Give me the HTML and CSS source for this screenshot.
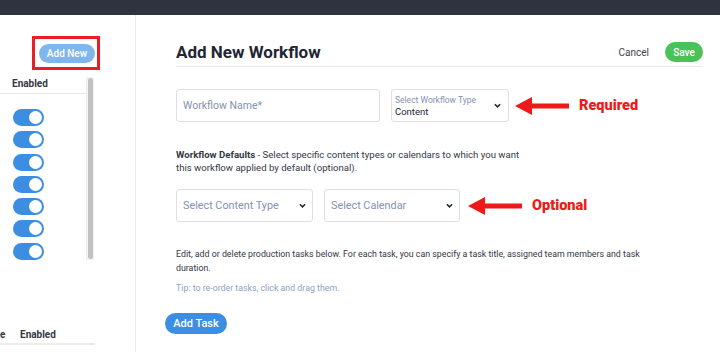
FILE: index.html
```html
<!DOCTYPE html>
<html lang="en">
<head>
	<meta charset="UTF-8" />
	<meta name="viewport" content="width=device-width, initial-scale=1.0" />
	<title>Add New Workflow</title>
	<link rel="stylesheet" href="styles.css">
</head>
<body>

	<div class="topbar"></div>

	<div class="layout">
		<aside class="sidebar">
			<div class="sidebar__top">
				<div class="highlight">
					<button class="btn btn--light">Add New</button>
				</div>
			</div>
			<div class="sidebar__table">
				<div class="sidebar__list">
					<div class="sidebar__head">Enabled</div>
					<div class="sidebar__rows">
						<span class="toggle"></span>
						<span class="toggle"></span>
						<span class="toggle"></span>
						<span class="toggle"></span>
						<span class="toggle"></span>
						<span class="toggle"></span>
						<span class="toggle"></span>
					</div>
				</div>
				<div class="scrollbar"><div class="scrollbar__thumb"></div></div>
			</div>
			<div class="sidebar__foot">
				<span class="sidebar__cut">e</span>
				<span class="sidebar__foot-label">Enabled</span>
			</div>
		</aside>

		<main class="main">
			<div class="main__header">
				<h1 class="main__title">Add New Workflow</h1>
				<div class="main__actions">
					<a class="main__cancel">Cancel</a>
					<button class="btn btn--green">Save</button>
				</div>
			</div>

			<div class="form-row form-row--first">
				<div class="field field--name"><span class="field__placeholder">Workflow Name*</span></div>
				<div class="field field--type">
					<div class="field__stack">
						<span class="field__label">Select Workflow Type</span>
						<span class="field__value">Content</span>
					</div>
					<svg class="chevron" viewBox="0 0 8 5"><polyline points="1,1 4,4 7,1" /></svg>
				</div>
				<svg class="arrow arrow--req" viewBox="0 0 54 18"><polygon points="0,9 17,0 17,6.5 54,6.5 54,11.5 17,11.5 17,18" /></svg>
				<span class="note">Required</span>
			</div>

			<p class="text text--defaults"><b>Workflow Defaults</b> - Select specific content types or calendars to which you want this workflow applied by default (optional).</p>

			<div class="form-row">
				<div class="field field--content">
					<span class="field__placeholder">Select Content Type</span>
					<svg class="chevron" viewBox="0 0 8 5"><polyline points="1,1 4,4 7,1" /></svg>
				</div>
				<div class="field field--calendar">
					<span class="field__placeholder">Select Calendar</span>
					<svg class="chevron" viewBox="0 0 8 5"><polyline points="1,1 4,4 7,1" /></svg>
				</div>
				<svg class="arrow arrow--opt" viewBox="0 0 54 18"><polygon points="0,9 17,0 17,6.5 54,6.5 54,11.5 17,11.5 17,18" /></svg>
				<span class="note">Optional</span>
			</div>

			<p class="text text--tasks">Edit, add or delete production tasks below. For each task, you can specify a task title, assigned team members and task duration.</p>
			<p class="text text--tip">Tip: to re-order tasks, click and drag them.</p>

			<button class="btn btn--blue">Add Task</button>
		</main>
	</div>

</body>
</html>
```

FILE: styles.css
```css
* {
	box-sizing: border-box;
}

html,
body {
	margin: 0px;
	padding: 0px;
}

body {
	width: 720px;
	height: 352px;
	overflow: hidden;
	background-color: #ffffff;
	font-family: Roboto, "Liberation Sans", sans-serif;
	color: #333845;
}

.topbar {
	height: 15px;
	background-color: #2f3340;
}

.layout {
	display: flex;
	height: 337px;
}

/* sidebar */

.sidebar {
	width: 136px;
	border-right: 1px solid #ebebeb;
	display: flex;
	flex-direction: column;
}

.sidebar__top {
	padding: 21px 0px 0px 32px;
	height: 62px;
}

.highlight {
	display: inline-block;
	border: 3px solid #ec1c24;
	padding: 5px 2px 4px 4px;
}

.btn {
	border: none;
	border-radius: 11px;
	font-family: Roboto, "Liberation Sans", sans-serif;
	font-weight: 500;
	color: #ffffff;
	padding: 0px;
	display: block;
}

.btn--light {
	width: 56px;
	height: 19px;
	font-size: 10px;
	background-color: #7eb7ee;
}

.sidebar__table {
	display: flex;
	width: 94px;
	height: 183px;
}

.sidebar__list {
	width: 86px;
}

.sidebar__head {
	height: 17px;
	padding: 1px 0px 0px 12px;
	font-size: 10px;
	font-weight: 700;
	border-bottom: 1px solid #e6e6e6;
}

.sidebar__rows {
	padding: 15px 0px 0px 13px;
	display: flex;
	flex-direction: column;
	gap: 5.3px;
}

.toggle {
	display: block;
	position: relative;
	width: 31px;
	height: 17px;
	border-radius: 9px;
	background-color: #3c8ee2;
}

.toggle::after {
	content: "";
	position: absolute;
	right: 2px;
	top: 2px;
	width: 13px;
	height: 13px;
	border-radius: 50%;
	background-color: #ffffff;
}

.scrollbar {
	width: 8px;
	background-color: #f4f4f4;
	border-left: 1px solid #ececec;
	padding: 1px 1px 1px 1px;
}

.scrollbar__thumb {
	height: 100%;
	border-radius: 3px;
	background-color: #c2c2c2;
}

.sidebar__foot {
	margin-top: 69px;
	width: 95px;
	height: 16px;
	border-bottom: 2px solid #ececec;
	font-size: 10px;
	font-weight: 700;
	display: flex;
}

.sidebar__cut {
	width: 20px;
}

/* main */

.main {
	flex: 1;
	padding: 0px 17px 0px 40px;
}

.main__header {
	display: flex;
	justify-content: space-between;
	align-items: center;
	padding-top: 27px;
	padding-bottom: 4px;
	border-bottom: 1px solid #e8e9ec;
}

.main__title {
	margin: 0px;
	font-size: 17px;
	line-height: 20px;
	font-weight: 700;
	color: #222633;
}

.main__actions {
	display: flex;
	align-items: center;
	gap: 16px;
}

.main__cancel {
	font-size: 10px;
	color: #3d414d;
}

.btn--green {
	width: 38px;
	height: 20px;
	font-size: 10px;
	background-color: #49c257;
}

.form-row {
	display: flex;
	align-items: center;
}

.form-row--first {
	margin-top: 22px;
}

.field {
	height: 33px;
	border: 1px solid #dcdfe5;
	border-radius: 3px;
	display: flex;
	align-items: center;
	justify-content: space-between;
	padding: 0px 6px 0px 6px;
	font-size: 10.8px;
}

.field__placeholder {
	color: #8592ae;
}

.field--name {
	width: 204px;
	font-size: 10.5px;
}

.field--type {
	width: 118px;
	margin-left: 11px;
	padding-left: 3px;
	padding-right: 7px;
}

.field__stack {
	display: flex;
	flex-direction: column;
	line-height: 12px;
}

.field__label {
	font-size: 8.5px;
	color: #8592ae;
}

.field__value {
	font-size: 9.5px;
	color: #222633;
}

.field--content {
	width: 137px;
}

.field--calendar {
	width: 136px;
	margin-left: 11px;
}

.chevron {
	width: 7px;
	height: 5px;
	fill: none;
	stroke: #222633;
	stroke-width: 1.8;
}

.arrow {
	width: 54px;
	height: 18px;
	fill: #ee1a1a;
}

.arrow--req {
	margin-left: 6px;
	margin-right: 10px;
}

.arrow--opt {
	margin-left: 8px;
	margin-right: 10px;
}

.note {
	font-family: Roboto, "Liberation Sans", sans-serif;
	font-size: 14.5px;
	font-weight: 900;
	color: #ee1a1a;
}

.text {
	margin: 0px;
	font-size: 8.8px;
	line-height: 14px;
}

.text--defaults {
	margin-top: 26px;
	margin-bottom: 15px;
	width: 350px;
	font-size: 9.6px;
	line-height: 13px;
}

.text--defaults b {
	font-weight: 700;
}

.text--tasks {
	margin-top: 25px;
	width: 475px;
}

.text--tip {
	margin-top: 6px;
	color: #8ea2bf;
}

.btn--blue {
	margin-top: 18px;
	margin-left: -11px;
	width: 62px;
	height: 21px;
	font-size: 11px;
	background-color: #3c8ee2;
}
```
